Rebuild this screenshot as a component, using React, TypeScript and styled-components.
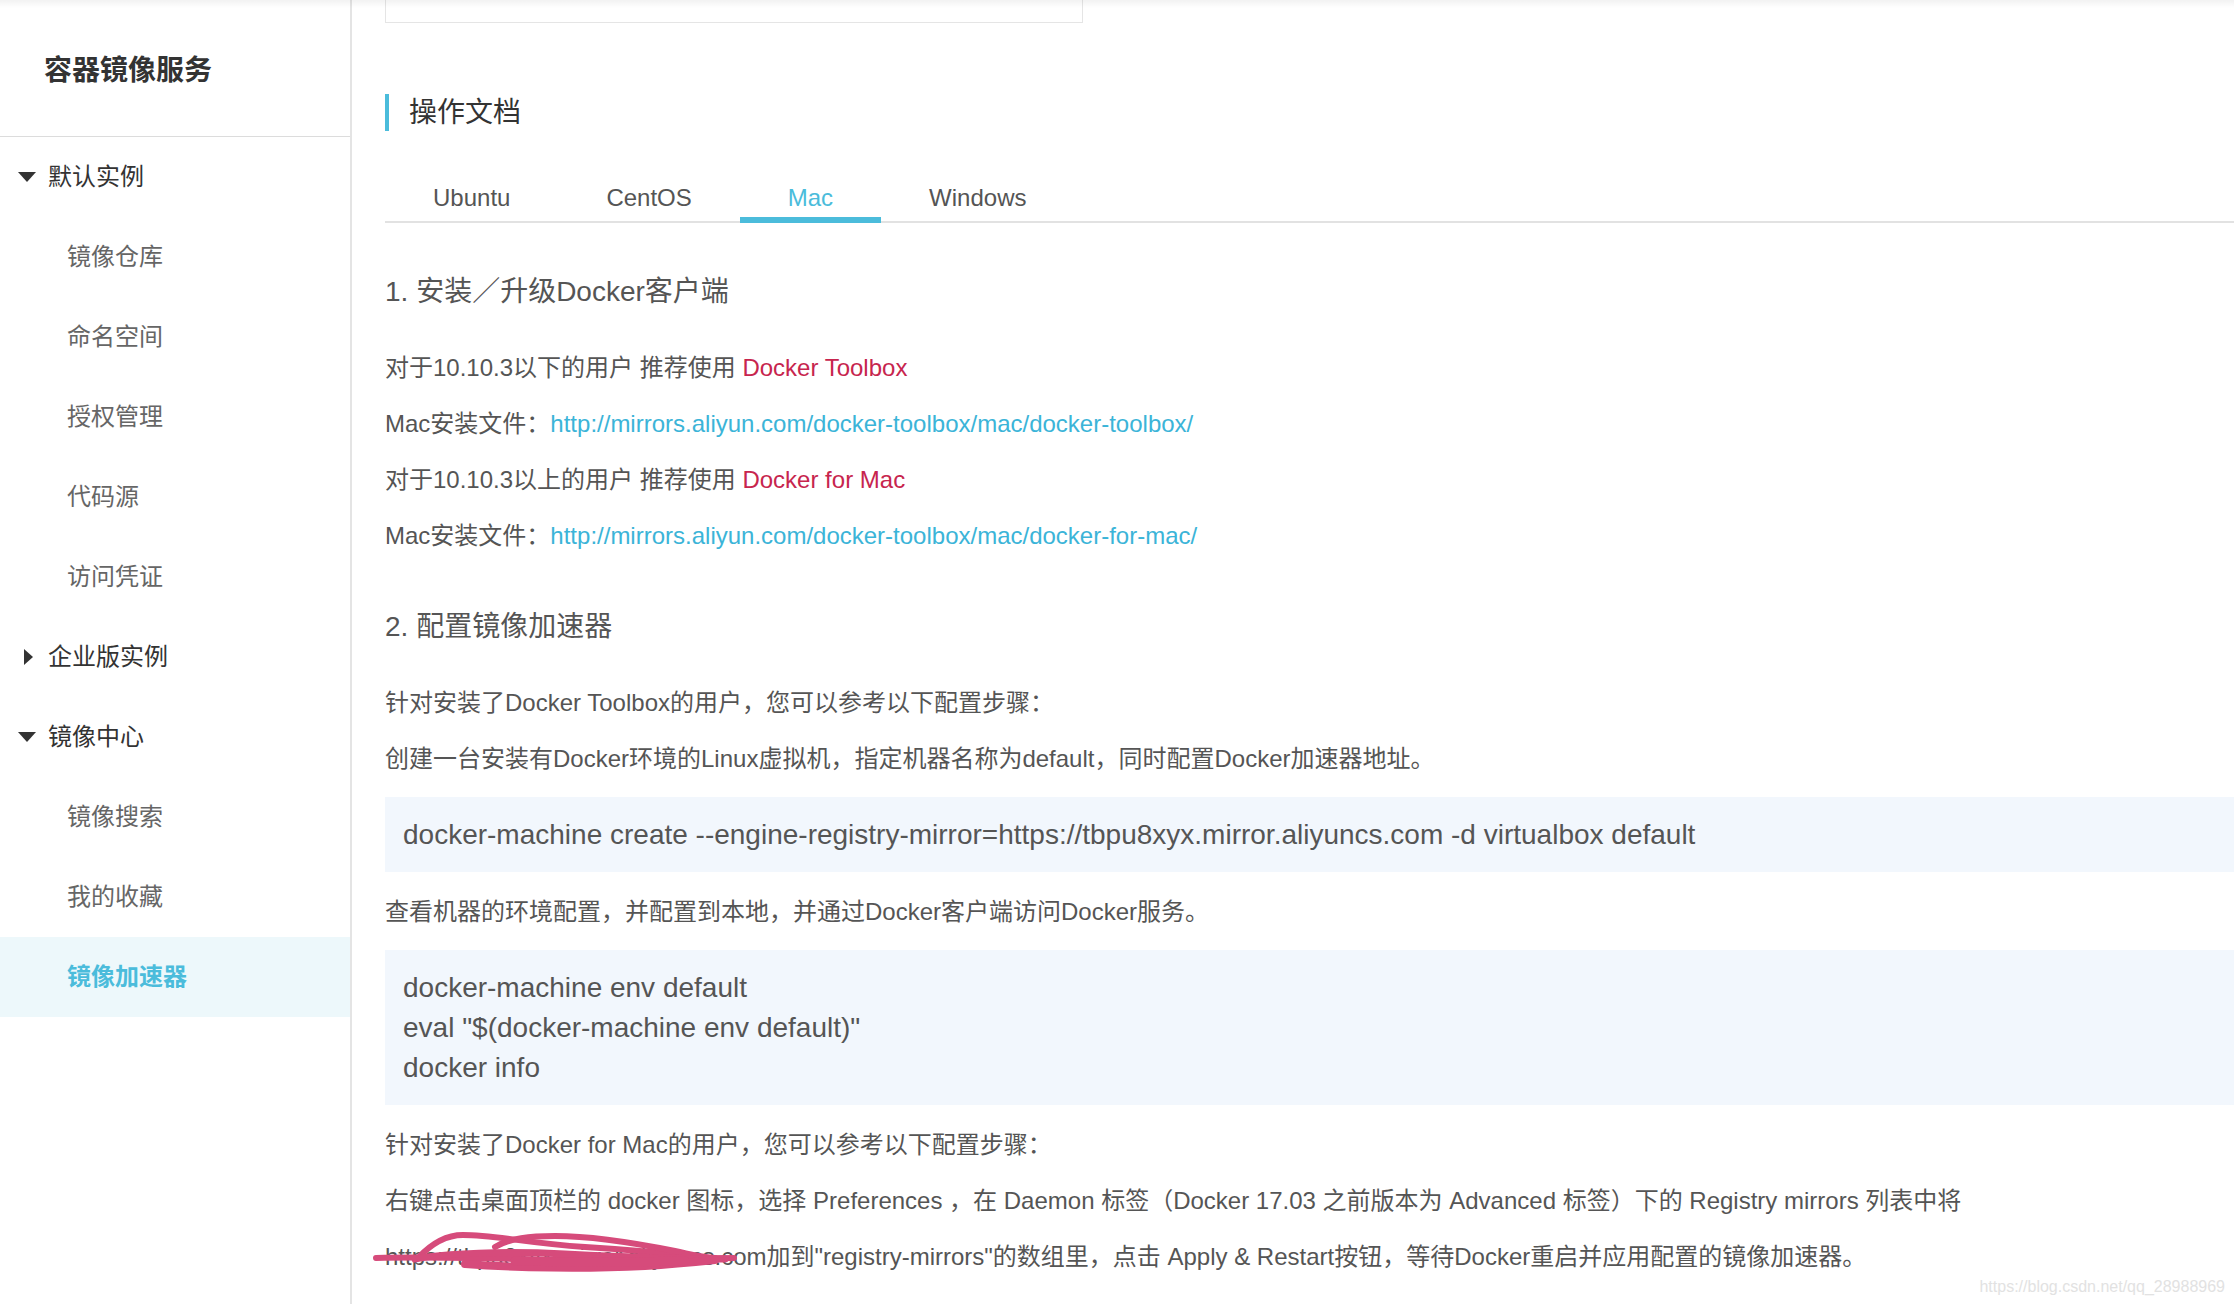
import styled, { createGlobalStyle, css } from "styled-components";

const FONT = `"Liberation Sans", "Noto Sans CJK SC", sans-serif`;
const BLUE = "#4bbcdb";

const GlobalStyle = createGlobalStyle`
  html, body {
    margin: 0;
    padding: 0;
    height: 100%;
  }
  body {
    font-family: ${FONT};
    background: #fff;
    overflow: hidden;
  }
  #root {
    height: 100%;
  }
`;

const Page = styled.div`
  position: relative;
  display: flex;
  height: 100vh;
`;

const TopShade = styled.div`
  position: absolute;
  top: 0;
  left: 0;
  right: 0;
  height: 8px;
  background: linear-gradient(rgba(0, 0, 0, 0.05), rgba(0, 0, 0, 0));
  pointer-events: none;
`;

const Sidebar = styled.aside`
  flex: 0 0 350px;
  border-right: 2px solid #e4e4e4;
`;

const SideTitle = styled.div`
  display: flex;
  align-items: center;
  height: 136px;
  padding-left: 44px;
  border-bottom: 1px solid #dcdcdc;
  font-size: 28px;
  font-weight: bold;
  color: #333;
`;

const MenuHead = styled.div`
  display: flex;
  align-items: center;
  height: 80px;
  padding-left: 18px;
  font-size: 24px;
  line-height: 1;
  color: #333;
`;

const CaretBox = styled.span`
  display: flex;
  align-items: center;
  width: 30px;
`;

const Caret = styled.span<{ $open: boolean }>`
  width: 0;
  height: 0;
  ${p =>
    p.$open
      ? css`
          border-left: 9px solid transparent;
          border-right: 9px solid transparent;
          border-top: 10px solid #333;
        `
      : css`
          margin-left: 6px;
          border-top: 8px solid transparent;
          border-bottom: 8px solid transparent;
          border-left: 9px solid #333;
        `}
`;

const MenuItem = styled.div<{ $active?: boolean }>`
  height: 80px;
  line-height: 80px;
  padding-left: 67px;
  font-size: 24px;
  color: #666;
  ${p =>
    p.$active &&
    css`
      background: #edf8fb;
      color: ${BLUE};
      font-weight: bold;
    `}
`;

const Main = styled.main`
  flex: 1;
  min-width: 0;
  padding-left: 33px;
  overflow: hidden;
`;

const TopBox = styled.div`
  width: 696px;
  height: 22px;
  border: 1px solid #e5e5e5;
  border-top: none;
`;

const SectionTitle = styled.h2`
  margin: 71px 0 0;
  height: 37px;
  line-height: 37px;
  padding-left: 20px;
  border-left: 4px solid ${BLUE};
  font-size: 28px;
  font-weight: normal;
  color: #333;
`;

const Tabs = styled.div`
  display: flex;
  margin-top: 49px;
  border-bottom: 2px solid #e2e2e2;
`;

const Tab = styled.div<{ $active?: boolean }>`
  position: relative;
  padding: 0 48px 6px;
  line-height: 35px;
  font-size: 24px;
  color: ${p => (p.$active ? BLUE : "#555")};

  ${p =>
    p.$active &&
    css`
      &::after {
        content: "";
        position: absolute;
        left: 0;
        right: 0;
        bottom: -2px;
        height: 6px;
        background: ${BLUE};
      }
    `}
`;

const Heading = styled.h3<{ $first?: boolean }>`
  margin: ${p => (p.$first ? 49 : 53)}px 0 38px;
  line-height: 40px;
  font-size: 28px;
  font-weight: normal;
  color: #555;
`;

const Para = styled.p`
  position: relative;
  margin: 0 0 20px;
  line-height: 36px;
  font-size: 24px;
  color: #555;
  white-space: nowrap;
`;

const Link = styled.a<{ $tone: "red" | "blue" }>`
  color: ${p => (p.$tone === "red" ? "#c7254e" : "#3bb4d8")};
  text-decoration: none;
`;

const Code = styled.pre`
  margin: 0 0 22px;
  padding: 17.5px 18px;
  background: #f2f7fd;
  font-family: ${FONT};
  font-size: 28px;
  line-height: 40px;
  color: #555;
`;

const Scribble = styled.svg`
  position: absolute;
  left: -12px;
  top: -8px;
  overflow: visible;
  pointer-events: none;
`;

const Watermark = styled.div`
  position: absolute;
  right: 9px;
  bottom: 8px;
  font-size: 16px;
  color: #e2e2e2;
`;

const menu = [
  { label: "默认实例", open: true, items: ["镜像仓库", "命名空间", "授权管理", "代码源", "访问凭证"] },
  { label: "企业版实例", open: false, items: [] },
  { label: "镜像中心", open: true, items: ["镜像搜索", "我的收藏", "镜像加速器"] }
];

const tabs = ["Ubuntu", "CentOS", "Mac", "Windows"];

const ScribbleMark = () => (
  <Scribble width="370" height="44" viewBox="-12 -8 370 44">
    <g fill="none" stroke="#d64b7b" strokeLinecap="round" strokeLinejoin="round">
      <path d="M -9 19 C 60 17, 150 21, 200 21 S 320 19, 349 19" strokeWidth="6" />
      <path d="M 33 19 C 45 6, 60 -4, 78 -4 C 110 -4, 140 4, 200 8 C 250 11, 290 15, 325 19" strokeWidth="6" />
      <path d="M 110 8 C 125 -1, 145 -3, 170 -3 C 210 -3, 255 5, 290 12 C 305 15, 315 18, 330 19" strokeWidth="6" />
      <path d="M 30 20 C 60 14, 120 12, 180 15 C 240 18, 290 20, 340 20" strokeWidth="7" />
      <path d="M 80 25 C 130 29, 200 30, 260 27 C 290 25, 310 23, 330 21" strokeWidth="8" />
      <path d="M 130 22 C 170 23, 220 24, 300 22" strokeWidth="9" />
    </g>
  </Scribble>
);

export default function App() {
  return (
    <>
      <GlobalStyle />
      <Page>
        <Sidebar>
          <SideTitle>容器镜像服务</SideTitle>
          {menu.map(group => (
            <div key={group.label}>
              <MenuHead>
                <CaretBox>
                  <Caret $open={group.open} />
                </CaretBox>
                {group.label}
              </MenuHead>
              {group.items.map(item => (
                <MenuItem key={item} $active={item === "镜像加速器"}>
                  {item}
                </MenuItem>
              ))}
            </div>
          ))}
        </Sidebar>
        <Main>
          <TopBox />
          <SectionTitle>操作文档</SectionTitle>
          <Tabs>
            {tabs.map(tab => (
              <Tab key={tab} $active={tab === "Mac"}>
                {tab}
              </Tab>
            ))}
          </Tabs>
          <Heading $first>1. 安装／升级Docker客户端</Heading>
          <Para>
            对于10.10.3以下的用户 推荐使用 <Link $tone="red">Docker Toolbox</Link>
          </Para>
          <Para>
            Mac安装文件：<Link $tone="blue">http://mirrors.aliyun.com/docker-toolbox/mac/docker-toolbox/</Link>
          </Para>
          <Para>
            对于10.10.3以上的用户 推荐使用 <Link $tone="red">Docker for Mac</Link>
          </Para>
          <Para>
            Mac安装文件：<Link $tone="blue">http://mirrors.aliyun.com/docker-toolbox/mac/docker-for-mac/</Link>
          </Para>
          <Heading>2. 配置镜像加速器</Heading>
          <Para>针对安装了Docker Toolbox的用户，您可以参考以下配置步骤：</Para>
          <Para>创建一台安装有Docker环境的Linux虚拟机，指定机器名称为default，同时配置Docker加速器地址。</Para>
          <Code>docker-machine create --engine-registry-mirror=https://tbpu8xyx.mirror.aliyuncs.com -d virtualbox default</Code>
          <Para>查看机器的环境配置，并配置到本地，并通过Docker客户端访问Docker服务。</Para>
          <Code>{`docker-machine env default
eval "$(docker-machine env default)"
docker info`}</Code>
          <Para>针对安装了Docker for Mac的用户，您可以参考以下配置步骤：</Para>
          <Para>
            右键点击桌面顶栏的 docker 图标，选择 Preferences ，在 Daemon 标签（Docker 17.03 之前版本为 Advanced 标签）下的 Registry mirrors 列表中将
          </Para>
          <Para>
            https://tbpu8xyx.mirror.aliyuncs.com加到"registry-mirrors"的数组里，点击 Apply &amp; Restart按钮，等待Docker重启并应用配置的镜像加速器。
            <ScribbleMark />
          </Para>
        </Main>
        <TopShade />
        <Watermark>https://blog.csdn.net/qq_28988969</Watermark>
      </Page>
    </>
  );
}
